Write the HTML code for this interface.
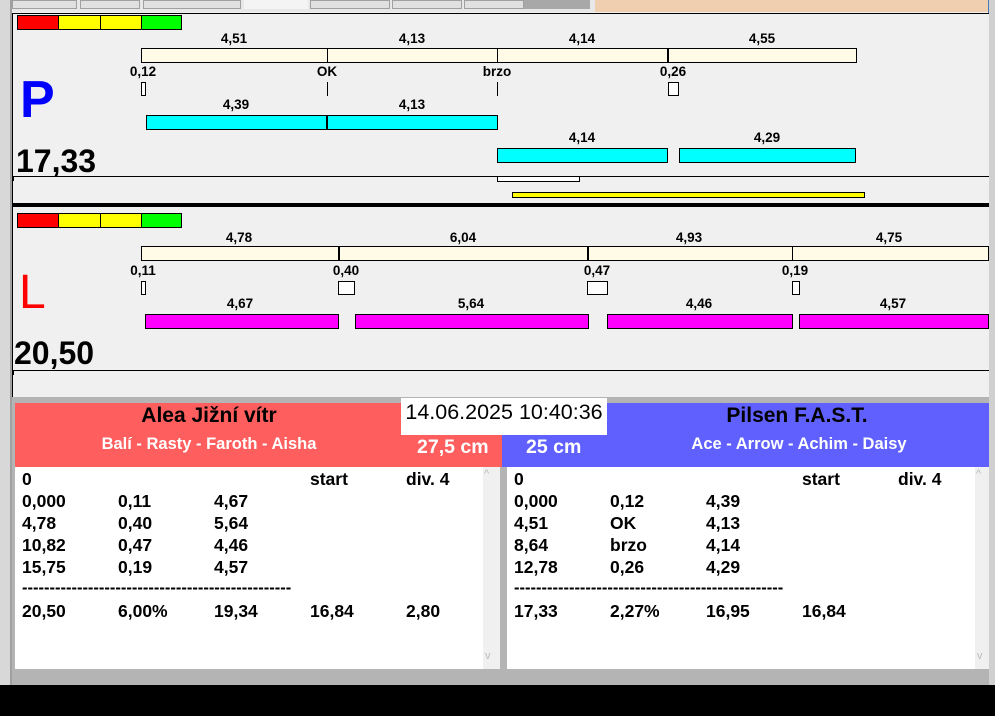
<!DOCTYPE html>
<html><head><meta charset="utf-8"><style>
body{margin:0;width:995px;height:716px;position:relative;overflow:hidden;background:#f0f0f0;font-family:"Liberation Sans",Arial,sans-serif}
div{position:absolute;box-sizing:border-box}
.t{font-size:13.5px;font-weight:bold;transform:translateX(-50%);white-space:nowrap;line-height:13px}
.cr{background:#fffbe6;border:1px solid #000;height:15px}
.cy{background:#00ffff;border:1px solid #000;height:15px}
.mg{background:#ff00ff;border:1px solid #000;height:15px}
.sq{background:#fff;border:1px solid #000;height:14px}
.vl{width:1px;background:#000}
.row{font-size:17.5px;font-weight:bold;line-height:22px;white-space:nowrap}
.dash{font-size:16.5px;font-weight:bold;line-height:20px;white-space:nowrap}
</style></head><body>
<!-- top tabs -->
<div style="left:0;top:0;width:995px;height:12px;background:#e8e8e8"></div>
<div style="left:12px;top:0;width:65px;height:9px;background:#e0e0e0;border:1px solid #a0a0a0"></div>
<div style="left:80px;top:0;width:60px;height:9px;background:#e0e0e0;border:1px solid #a0a0a0"></div>
<div style="left:143px;top:0;width:98px;height:9px;background:#e0e0e0;border:1px solid #a0a0a0"></div>
<div style="left:244px;top:0;width:64px;height:9px;background:#f4f4f4"></div>
<div style="left:310px;top:0;width:80px;height:9px;background:#e0e0e0;border:1px solid #a0a0a0"></div>
<div style="left:392px;top:0;width:70px;height:9px;background:#e0e0e0;border:1px solid #a0a0a0"></div>
<div style="left:464px;top:0;width:60px;height:9px;background:#e0e0e0;border:1px solid #a0a0a0"></div>
<div style="left:524px;top:0;width:66px;height:9px;background:#a8a8a8"></div>
<div style="left:595px;top:0;width:395px;height:12px;background:#efcfb0"></div>
<div style="left:0;top:0;width:12px;height:716px;background:#d8d8d8;border-right:2px solid #a0a0a0"></div>
<div style="left:988px;top:0;width:7px;height:716px;background:#d0d0d0;border-left:1px solid #4a7ab0"></div>
<!-- main panel -->
<div style="left:12px;top:13px;width:977px;height:672px;background:#f0f0f0;border-top:1px solid #000;border-left:1px solid #000"></div>

<!-- P section color bar -->
<div style="left:17px;top:15px;width:42px;height:15px;background:#f00;border:1px solid #000"></div>
<div style="left:58px;top:15px;width:43px;height:15px;background:#ff0;border:1px solid #000"></div>
<div style="left:100px;top:15px;width:42px;height:15px;background:#ff0;border:1px solid #000"></div>
<div style="left:141px;top:15px;width:41px;height:15px;background:#0f0;border:1px solid #000"></div>

<div class="t" style="left:234px;top:32px">4,51</div>
<div class="t" style="left:412px;top:32px">4,13</div>
<div class="t" style="left:582px;top:32px">4,14</div>
<div class="t" style="left:762px;top:32px">4,55</div>
<div class="cr" style="left:141px;top:48px;width:716px"></div>
<div class="vl" style="left:327px;top:48px;height:15px"></div>
<div class="vl" style="left:497px;top:48px;height:15px"></div>
<div class="vl" style="left:667px;top:48px;height:15px;width:2px"></div>
<div class="t" style="left:143px;top:65px">0,12</div>
<div class="t" style="left:327px;top:65px">OK</div>
<div class="t" style="left:497px;top:65px">brzo</div>
<div class="t" style="left:673px;top:65px">0,26</div>
<div class="sq" style="left:141px;top:82px;width:5px"></div>
<div class="vl" style="left:327px;top:82px;height:14px"></div>
<div class="vl" style="left:497px;top:82px;height:14px"></div>
<div class="sq" style="left:668px;top:82px;width:11px"></div>
<div style="left:20px;top:72px;font-size:52px;font-weight:bold;color:#0000ff;line-height:56px">P</div>
<div class="t" style="left:236px;top:98px">4,39</div>
<div class="t" style="left:412px;top:98px">4,13</div>
<div class="cy" style="left:146px;top:115px;width:352px"></div>
<div class="vl" style="left:326px;top:115px;height:15px;width:2px"></div>
<div class="t" style="left:582px;top:131px">4,14</div>
<div class="t" style="left:767px;top:131px">4,29</div>
<div class="cy" style="left:497px;top:148px;width:171px"></div>
<div class="cy" style="left:679px;top:148px;width:177px"></div>
<div style="left:16px;top:143px;font-size:32px;font-weight:bold;line-height:36px">17,33</div>
<div style="left:12px;top:176px;width:977px;height:1px;background:#000"></div>
<div style="left:13px;top:176px;width:1px;height:5px;background:#000"></div>
<div style="left:497px;top:176px;width:83px;height:6px;background:#fff;border:1px solid #000"></div>
<div style="left:512px;top:192px;width:353px;height:6px;background:#ff0;border:1px solid #000"></div>
<div style="left:12px;top:203px;width:977px;height:4px;background:#000"></div>

<!-- L section -->
<div style="left:17px;top:213px;width:42px;height:15px;background:#f00;border:1px solid #000"></div>
<div style="left:58px;top:213px;width:43px;height:15px;background:#ff0;border:1px solid #000"></div>
<div style="left:100px;top:213px;width:42px;height:15px;background:#ff0;border:1px solid #000"></div>
<div style="left:141px;top:213px;width:41px;height:15px;background:#0f0;border:1px solid #000"></div>
<div class="t" style="left:239px;top:231px">4,78</div>
<div class="t" style="left:463px;top:231px">6,04</div>
<div class="t" style="left:689px;top:231px">4,93</div>
<div class="t" style="left:889px;top:231px">4,75</div>
<div class="cr" style="left:141px;top:246px;width:848px"></div>
<div class="vl" style="left:338px;top:246px;height:15px;width:2px"></div>
<div class="vl" style="left:587px;top:246px;height:15px;width:2px"></div>
<div class="vl" style="left:792px;top:246px;height:15px"></div>
<div class="t" style="left:143px;top:264px">0,11</div>
<div class="t" style="left:346px;top:264px">0,40</div>
<div class="t" style="left:597px;top:264px">0,47</div>
<div class="t" style="left:795px;top:264px">0,19</div>
<div class="sq" style="left:141px;top:281px;width:5px"></div>
<div class="sq" style="left:338px;top:281px;width:17px"></div>
<div class="sq" style="left:587px;top:281px;width:21px"></div>
<div class="sq" style="left:792px;top:281px;width:8px"></div>
<div style="left:19px;top:267px;font-size:48px;color:#ff0000;line-height:52px">L</div>
<div class="t" style="left:240px;top:297px">4,67</div>
<div class="t" style="left:471px;top:297px">5,64</div>
<div class="t" style="left:699px;top:297px">4,46</div>
<div class="t" style="left:893px;top:297px">4,57</div>
<div class="mg" style="left:145px;top:314px;width:194px"></div>
<div class="mg" style="left:355px;top:314px;width:234px"></div>
<div class="mg" style="left:607px;top:314px;width:186px"></div>
<div class="mg" style="left:799px;top:314px;width:190px"></div>
<div style="left:14px;top:335px;font-size:32px;font-weight:bold;line-height:36px">20,50</div>
<div style="left:12px;top:370px;width:977px;height:1px;background:#000"></div>
<div style="left:13px;top:370px;width:1px;height:5px;background:#000"></div>

<!-- bottom area -->
<div style="left:12px;top:397px;width:977px;height:288px;background:#b4b4b4"></div>
<div style="left:15px;top:403px;width:488px;height:64px;background:#fe5e5e"></div>
<div style="left:502px;top:403px;width:487px;height:64px;background:#6060fe"></div>
<div style="left:401px;top:398px;width:206px;height:37px;background:#fff;font-size:21.5px;line-height:28px;text-align:center;white-space:nowrap">14.06.2025 10:40:36</div>
<div style="left:209px;top:403px;transform:translateX(-50%);font-size:21px;font-weight:bold;white-space:nowrap;line-height:26px">Alea Jižní vítr</div>
<div style="left:209px;top:434px;transform:translateX(-50%);font-size:16.5px;font-weight:bold;color:#fff;white-space:nowrap;line-height:20px">Balí - Rasty - Faroth - Aisha</div>
<div style="left:417px;top:435px;font-size:19.5px;font-weight:bold;color:#fff;white-space:nowrap;line-height:24px">27,5 cm</div>
<div style="left:526px;top:435px;font-size:19.5px;font-weight:bold;color:#fff;white-space:nowrap;line-height:24px">25 cm</div>
<div style="left:797px;top:403px;transform:translateX(-50%);font-size:21px;font-weight:bold;white-space:nowrap;line-height:26px">Pilsen F.A.S.T.</div>
<div style="left:799px;top:434px;transform:translateX(-50%);font-size:16.5px;font-weight:bold;color:#fff;white-space:nowrap;line-height:20px">Ace - Arrow - Achim - Daisy</div>

<div style="left:15px;top:467px;width:485px;height:202px;background:#fff"></div>
<div style="left:483px;top:467px;width:17px;height:202px;background:#f0f0f0"></div>
<div style="left:484px;top:468px;font-size:11px;color:#bbb">^</div>
<div style="left:485px;top:650px;font-size:11px;color:#bbb">v</div>
<div style="left:507px;top:467px;width:482px;height:202px;background:#fff"></div>
<div style="left:975px;top:467px;width:14px;height:202px;background:#f0f0f0"></div>
<div style="left:976px;top:468px;font-size:11px;color:#bbb">^</div>
<div style="left:977px;top:650px;font-size:11px;color:#bbb">v</div>

<div class="row" style="left:22px;top:468px">0</div>
<div class="row" style="left:310px;top:468px">start</div>
<div class="row" style="left:406px;top:468px">div. 4</div>
<div class="row" style="left:22px;top:490px">0,000<br>4,78<br>10,82<br>15,75</div>
<div class="row" style="left:118px;top:490px">0,11<br>0,40<br>0,47<br>0,19</div>
<div class="row" style="left:214px;top:490px">4,67<br>5,64<br>4,46<br>4,57</div>
<div class="dash" style="left:22px;top:578px">-------------------------------------------------</div>
<div class="row" style="left:22px;top:600px">20,50</div>
<div class="row" style="left:118px;top:600px">6,00%</div>
<div class="row" style="left:214px;top:600px">19,34</div>
<div class="row" style="left:310px;top:600px">16,84</div>
<div class="row" style="left:406px;top:600px">2,80</div>

<div class="row" style="left:514px;top:468px">0</div>
<div class="row" style="left:802px;top:468px">start</div>
<div class="row" style="left:898px;top:468px">div. 4</div>
<div class="row" style="left:514px;top:490px">0,000<br>4,51<br>8,64<br>12,78</div>
<div class="row" style="left:610px;top:490px">0,12<br>OK<br>brzo<br>0,26</div>
<div class="row" style="left:706px;top:490px">4,39<br>4,13<br>4,14<br>4,29</div>
<div class="dash" style="left:514px;top:578px">-------------------------------------------------</div>
<div class="row" style="left:514px;top:600px">17,33</div>
<div class="row" style="left:610px;top:600px">2,27%</div>
<div class="row" style="left:706px;top:600px">16,95</div>
<div class="row" style="left:802px;top:600px">16,84</div>

<div style="left:0;top:685px;width:995px;height:31px;background:#000"></div>
</body></html>
